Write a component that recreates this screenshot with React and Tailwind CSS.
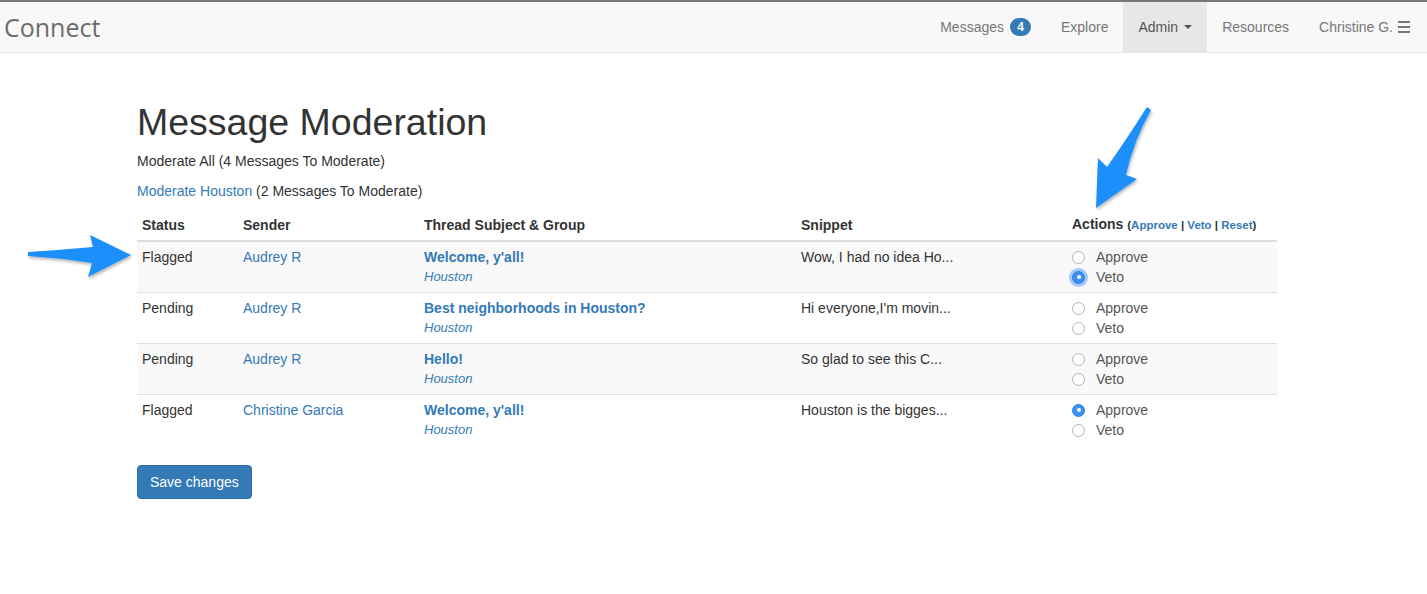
import React from "react";

const rows = [
  { status: "Flagged", sender: "Audrey R", subject: "Welcome, y'all!", snippet: "Wow, I had no idea Ho...", choice: "veto", focus: true },
  { status: "Pending", sender: "Audrey R", subject: "Best neighborhoods in Houston?", snippet: "Hi everyone,I'm movin...", choice: null },
  { status: "Pending", sender: "Audrey R", subject: "Hello!", snippet: "So glad to see this C...", choice: null },
  { status: "Flagged", sender: "Christine Garcia", subject: "Welcome, y'all!", snippet: "Houston is the bigges...", choice: "approve" },
];

const Radio = ({ checked, focus, label }) => (
  <label className="flex items-center h-5 text-[#555]">
    {checked ? (
      <span
        className={
          "w-[13px] h-[13px] rounded-full bg-[#3b8ff6] border border-[#2f7fe6] flex items-center justify-center " +
          (focus ? "shadow-[0_0_0_3px_rgba(59,143,246,0.45)]" : "")
        }
      >
        <span className="w-[4px] h-[4px] rounded-full bg-white" />
      </span>
    ) : (
      <span className="w-[13px] h-[13px] rounded-full bg-white border border-[#b4b4b4]" />
    )}
    <span className="ml-[11px]">{label}</span>
  </label>
);

const NavLink = ({ children, active }) => (
  <a
    className={
      "h-[50px] flex items-center px-[15px] " +
      (active ? "bg-[#e7e7e7] text-[#555]" : "text-[#777]")
    }
  >
    {children}
  </a>
);

const Arrows = () => (
  <svg
    className="absolute top-0 left-0 pointer-events-none"
    width="1427"
    height="594"
    viewBox="0 0 1427 594"
  >
    <defs>
      <filter id="sh" x="-20%" y="-20%" width="140%" height="140%">
        <feDropShadow dx="1" dy="2" stdDeviation="1.5" floodColor="#000" floodOpacity="0.3" />
      </filter>
    </defs>
    <path
      d="M28,252 Q60,250 93,247 L90,235 L131,255 L88,277 L92,263 Q60,258 28,256 Z"
      fill="#1e8ffb"
      filter="url(#sh)"
    />
    <path
      d="M1147,107 Q1126,140 1107,167 L1098,158 L1096,208 L1137,179 L1126,175 Q1134,140 1151,110 Z"
      fill="#1e8ffb"
      filter="url(#sh)"
    />
  </svg>
);

export default function App() {
  return (
    <div className="relative w-[1427px] h-[594px] bg-white text-[14px] leading-5 text-[#333] font-['Liberation_Sans',Arial,sans-serif] overflow-hidden">
      <nav className="flex items-center justify-between bg-[#f8f8f8] border-t-2 border-t-[#777] border-b border-b-[#e7e7e7]">
        <a className="pl-[4px] h-[50px] flex items-center text-[25px] text-[#6b6b6b] font-['Open_Sans',sans-serif]">
          Connect
        </a>
        <div className="flex pr-[2px]">
          <NavLink>
            Messages
            <span className="ml-[6px] h-[18px] min-w-[21px] px-[7px] rounded-full bg-[#337ab7] text-white text-[12px] font-bold leading-[18px] text-center">
              4
            </span>
          </NavLink>
          <NavLink>Explore</NavLink>
          <NavLink active>
            Admin
            <span className="ml-[6px] w-0 h-0 border-x-[4px] border-x-transparent border-t-[4px] border-t-[#555]" />
          </NavLink>
          <NavLink>Resources</NavLink>
          <NavLink>
            Christine G.
            <span className="ml-[5px] flex flex-col gap-[3px] w-[12px]">
              <span className="h-[2px] bg-[#777]" />
              <span className="h-[2px] bg-[#777]" />
              <span className="h-[2px] bg-[#777]" />
            </span>
          </NavLink>
        </div>
      </nav>

      <main className="pl-[137px]">
        <div className="w-[1140px]">
          <h1 className="mt-[49px] mb-[8px] text-[37.5px] leading-[1.1] text-[#333]">Message Moderation</h1>
          <p className="mb-[10px]">Moderate All (4 Messages To Moderate)</p>
          <p className="mb-[8px]">
            <a className="text-[#337ab7]">Moderate Houston</a> (2 Messages To Moderate)
          </p>

          <table className="w-full border-collapse">
            <thead>
              <tr className="text-left">
                <th className="w-[101px] p-[5px] font-bold border-b-2 border-b-[#ddd] align-bottom">Status</th>
                <th className="w-[181px] p-[5px] font-bold border-b-2 border-b-[#ddd] align-bottom">Sender</th>
                <th className="w-[377px] p-[5px] font-bold border-b-2 border-b-[#ddd] align-bottom">Thread Subject &amp; Group</th>
                <th className="w-[271px] p-[5px] font-bold border-b-2 border-b-[#ddd] align-bottom">Snippet</th>
                <th className="p-[5px] font-bold border-b-2 border-b-[#ddd] align-bottom whitespace-nowrap">
                  Actions{" "}
                  <span className="text-[11.5px]">
                    (<a className="text-[#337ab7]">Approve</a> | <a className="text-[#337ab7]">Veto</a> |{" "}
                    <a className="text-[#337ab7]">Reset</a>)
                  </span>
                </th>
              </tr>
            </thead>
            <tbody>
              {rows.map((r, i) => (
                <tr key={i} className={i % 2 === 0 ? "bg-[#f9f9f9]" : ""}>
                  <td className="p-[5px] align-top border-t border-t-[#ddd]">{r.status}</td>
                  <td className="p-[5px] align-top border-t border-t-[#ddd]">
                    <a className="text-[#337ab7]">{r.sender}</a>
                  </td>
                  <td className="p-[5px] align-top border-t border-t-[#ddd]">
                    <div>
                      <a className="text-[#337ab7] font-bold">{r.subject}</a>
                    </div>
                    <div className="italic text-[13px] leading-5 text-[#337ab7]">Houston</div>
                  </td>
                  <td className="p-[5px] align-top border-t border-t-[#ddd]">{r.snippet}</td>
                  <td className="p-[5px] align-top border-t border-t-[#ddd]">
                    <Radio label="Approve" checked={r.choice === "approve"} />
                    <Radio label="Veto" checked={r.choice === "veto"} focus={r.focus} />
                  </td>
                </tr>
              ))}
            </tbody>
          </table>

          <button className="mt-[20px] px-[12px] py-[6px] rounded-[4px] bg-[#337ab7] border border-[#2e6da4] text-white text-[14px] leading-5">
            Save changes
          </button>
        </div>
      </main>

      <Arrows />
    </div>
  );
}
